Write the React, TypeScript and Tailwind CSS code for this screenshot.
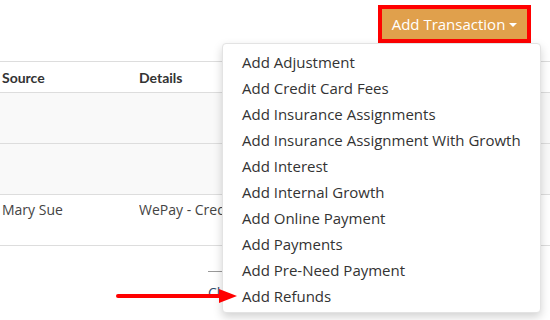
import React from "react";

const items = [
  "Add Adjustment",
  "Add Credit Card Fees",
  "Add Insurance Assignments",
  "Add Insurance Assignment With Growth",
  "Add Interest",
  "Add Internal Growth",
  "Add Online Payment",
  "Add Payments",
  "Add Pre-Need Payment",
  "Add Refunds",
];

export default function App() {
  return (
    <div
      className="relative w-[550px] h-[320px] overflow-hidden bg-white text-[#333]"
      style={{ fontFamily: '"Open Sans", "Noto Sans", sans-serif' }}
    >
      {/* top bar */}
      <div className="h-[61px] flex justify-end items-start pt-[5px] pr-[19px]">
        <div className="border-[4px] border-[#ff0000] bg-[#e0a04c] h-[38px] w-[153px] flex items-center justify-center gap-[4px] text-white text-[15px]">
          <span>Add Transaction</span>
          <span className="w-0 h-0 border-l-[4px] border-r-[4px] border-t-[4px] border-l-transparent border-r-transparent border-t-white mt-[1px]" />
        </div>
      </div>

      {/* table */}
      <div className="border-t border-[#dddddd]">
        <div
          className="grid grid-cols-[139px_1fr] h-[31px] items-center border-b border-[#dddddd] text-[14px] font-bold text-[#333]"
          style={{ fontFamily: "Lato, sans-serif" }}
        >
          <div className="pl-[2px]">Source</div>
          <div>Details</div>
        </div>
        <div className="h-[51px] bg-[#f9f9f9] border-b border-[#dddddd]" />
        <div className="h-[51px] bg-[#f9f9f9] border-b border-[#dddddd]" />
        <div className="grid grid-cols-[139px_83px] h-[51px] border-b border-[#dddddd] text-[14px] text-[#444] pt-[4px]">
          <div className="pl-[2px]">Mary Sue</div>
          <div className="whitespace-nowrap overflow-hidden">WePay - Credit Card</div>
        </div>
      </div>

      {/* footer */}
      <div className="ml-[208px] mt-[25px] w-[14px] border-t border-[#999] overflow-hidden">
        <div className="pt-[10px] text-[14px] text-[#2a4a6b] whitespace-nowrap">Close</div>
      </div>

      {/* dropdown menu */}
      <div className="absolute left-[222px] top-[43px] w-[319px] h-[270px] bg-white rounded-[4px] border border-[#e3e3e3] shadow-[0_4px_10px_rgba(0,0,0,0.18)] pt-[5px]">
        {items.map((t) => (
          <div key={t} className="h-[26px] leading-[26px] pl-[19px] text-[15px] text-[#333] whitespace-nowrap">
            {t}
          </div>
        ))}
      </div>

      {/* annotation arrow */}
      <svg className="absolute left-[115px] top-[287px]" width="125" height="18" viewBox="0 0 125 18">
        <line x1="3" y1="9" x2="108" y2="9" stroke="#ff0000" strokeWidth="4" strokeLinecap="round" />
        <polygon points="104,2 122,9 104,16" fill="#ff0000" />
      </svg>
    </div>
  );
}
